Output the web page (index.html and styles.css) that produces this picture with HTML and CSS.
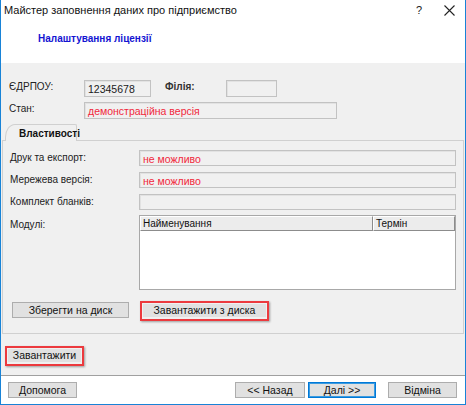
FILE: index.html
```html
<!DOCTYPE html>
<html lang="uk">
<head>
<meta charset="utf-8">
<title>Майстер заповнення даних про підприємство</title>
<link rel="stylesheet" href="styles.css">
</head>
<body>
<div class="window">
  <div class="titlebar">
    <span class="title">Майстер заповнення даних про підприємство</span>
    <span class="tb-btn help">?</span>
    <span class="tb-btn close">
      <svg width="11" height="11" viewBox="0 0 11 11"><path d="M0.5 0.5 L10.5 10.5 M10.5 0.5 L0.5 10.5" stroke="#222" stroke-width="1.1" fill="none"/></svg>
    </span>
  </div>
  <div class="header">
    <h1 class="heading">Налаштування ліцензії</h1>
  </div>
  <div class="content">
    <div class="top-form">
      <div class="row">
        <span class="lbl lbl-top">ЄДРПОУ:</span>
        <div class="field f-code">12345678</div>
        <span class="lbl lbl-branch">Філія:</span>
        <div class="field f-branch"></div>
      </div>
      <div class="row">
        <span class="lbl lbl-top">Стан:</span>
        <div class="field f-state red">демонстраційна версія</div>
      </div>
    </div>
    <div class="tabs">
      <div class="tab">Властивості</div>
    </div>
    <div class="panel">
      <div class="prow">
        <span class="lbl lbl-panel">Друк та експорт:</span>
        <div class="field f-wide red">не можливо</div>
      </div>
      <div class="prow">
        <span class="lbl lbl-panel">Мережева версія:</span>
        <div class="field f-wide red">не можливо</div>
      </div>
      <div class="prow">
        <span class="lbl lbl-panel">Комплект бланків:</span>
        <div class="field f-wide"></div>
      </div>
      <div class="prow modules">
        <span class="lbl lbl-panel">Модулі:</span>
        <div class="listview">
          <div class="lv-head">
            <div class="lv-col c-name">Найменування</div>
            <div class="lv-col c-term">Термін</div>
          </div>
          <div class="lv-body"></div>
        </div>
      </div>
      <div class="panel-buttons">
        <button class="btn b-save">Зберегти на диск</button>
        <span class="hl hl-disk"><button class="btn b-loaddisk">Завантажити з диска</button></span>
      </div>
    </div>
    <div class="load-row">
      <span class="hl hl-load"><button class="btn b-load">Завантажити</button></span>
    </div>
  </div>
  <div class="footer">
    <button class="btn b-help">Допомога</button>
    <div class="nav">
      <button class="btn b-back">&lt;&lt; Назад</button>
      <button class="btn b-next">Далі &gt;&gt;</button>
      <button class="btn b-cancel">Відміна</button>
    </div>
  </div>
</div>
</body>
</html>
```

FILE: styles.css
```css
* { box-sizing: border-box; }
html, body { margin: 0; padding: 0; background: #ffffff; }
body {
  font-family: "Liberation Sans", Arial, sans-serif;
  font-size: 10px;
  color: #1e1e1e;
}
.window {
  width: 466px;
  height: 405px;
  border: 1px solid #1883d7;
  border-top: none;
  display: flex;
  flex-direction: column;
  overflow: hidden;
}
.titlebar {
  height: 20px;
  display: flex;
  align-items: center;
  background: #fff;
  padding-left: 3px;
}
.title {
  font-size: 11px;
  color: #111;
  flex: 1;
}
.tb-btn {
  display: flex;
  align-items: center;
  justify-content: center;
  height: 20px;
}
.help {
  width: 12px;
  margin-right: 19px;
  font-size: 11px;
  color: #222;
}
.close {
  width: 11px;
  margin-right: 10px;
}
.header {
  height: 43px;
  background: #fff;
  padding: 12px 0 0 37px;
}
.heading {
  margin: 0;
  font-size: 10px;
  font-weight: bold;
  color: #1414d2;
  line-height: 13px;
}
.content {
  height: 313px;
  background: #f0f0f0;
  display: flex;
  flex-direction: column;
  border-bottom: 1px solid #a0a0a0;
}
.top-form {
  padding: 17px 0 0 8px;
  display: flex;
  flex-direction: column;
  gap: 5px;
}
.row {
  display: flex;
  align-items: flex-start;
  height: 17px;
}
.lbl {
  line-height: 13px;
  color: #222;
}
.lbl-top { width: 75px; }
.lbl-branch { width: 61px; margin-left: 14px; font-weight: bold; color: #333; }
.field {
  height: 17px;
  border: 1px solid #c2c2c2;
  box-shadow: inset 1px 1px 0 #e2e2e2;
  background: #f0f0f0;
  padding: 1px 0 0 3px;
  line-height: 14px;
  font-size: 10.5px;
  color: #1a1a1a;
  white-space: nowrap;
}
.red { color: #f0283c; }
.f-code { width: 67px; }
.f-branch { width: 51px; }
.f-state { width: 253px; }
.tabs {
  margin-top: 5px;
  padding-left: 4px;
  height: 16px;
  position: relative;
  z-index: 1;
}
.tab {
  width: 72px;
  height: 17px;
  border: 1px solid #d0d0d0;
  border-bottom: none;
  border-top-left-radius: 10px 13px;
  border-top-right-radius: 2px;
  background: #f0f0f0;
  font-weight: bold;
  color: #111;
  padding: 2px 0 0 13px;
  line-height: 13px;
}
.panel {
  margin: 0 1px 0 1px;
  height: 194px;
  border: 1px solid #d0d0d0;
  padding: 9px 0 0 7px;
  display: flex;
  flex-direction: column;
  gap: 6px;
}
.prow {
  display: flex;
  align-items: flex-start;
  height: 16px;
}
.lbl-panel { width: 129px; padding-top: 1px; }
.f-wide { width: 317px; height: 16px; padding-top: 1px; }
.modules { height: 75px; margin-top: -1px; }
.modules .lbl-panel { padding-top: 3px; }
.listview {
  width: 317px;
  height: 75px;
  border: 1px solid #a8a8a8;
  background: #fff;
  display: flex;
  flex-direction: column;
}
.lv-head {
  display: flex;
  height: 15px;
}
.lv-col {
  height: 15px;
  background: #ececec;
  border: 1px solid #fff;
  border-right-color: #8c8c8c;
  border-bottom-color: #8c8c8c;
  padding-left: 2px;
  line-height: 13px;
  color: #111;
}
.c-name { width: 233px; }
.c-term { width: 82px; }
.lv-body { flex: 1; }
.panel-buttons {
  display: flex;
  align-items: flex-start;
  margin-top: 6px;
  padding-left: 2px;
}
.btn {
  font-family: "Liberation Sans", Arial, sans-serif;
  font-size: 10.5px;
  color: #111;
  background: #e1e1e1;
  border: 1px solid #adadad;
  padding: 0;
  height: 16px;
  line-height: 14px;
  margin: 0;
}
.b-save { width: 117px; }
.hl {
  display: inline-flex;
  border: 2px solid #ec3a3e;
  box-shadow: 1px 1px 2px rgba(0,0,0,0.35);
  background: #f0f0f0;
}
.hl .btn { border: none; height: 13px; line-height: 13px; }
.hl-disk { margin-left: 11px; margin-top: -1px; padding: 1px 1px 2px 1px; }
.b-loaddisk { width: 123px; }
.load-row {
  padding: 12px 0 0 4px;
}
.hl-load { padding: 1px 1px 2px 1px; }
.b-load { width: 73px; }
.footer {
  height: 27px;
  background: #fff;
  display: flex;
  align-items: flex-start;
  justify-content: space-between;
  padding: 6px 8px 0 7px;
}
.b-help { width: 69px; }
.nav { display: flex; gap: 3px; }
.b-back { width: 70px; }
.b-next { width: 68px; border-color: #0078d7; box-shadow: inset 0 0 0 1px #3b9be0; }
.b-cancel { width: 69px; margin-left: 9px; }
```
